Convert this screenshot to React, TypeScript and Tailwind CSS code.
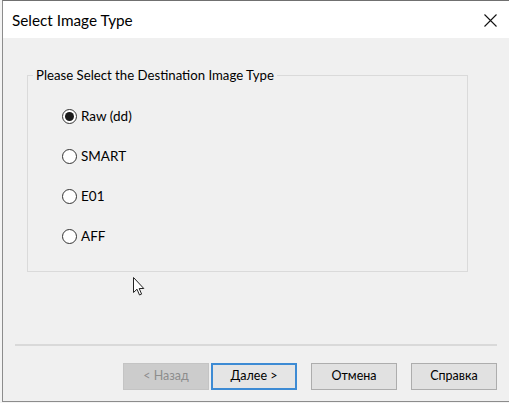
const font = "font-['Lato','Noto_Sans',sans-serif]";

const options = [
  { label: "Raw (dd)", checked: true },
  { label: "SMART", checked: false },
  { label: "E01", checked: false },
  { label: "AFF", checked: false },
];

const Radio = ({ checked }: { checked: boolean }) => (
  <span className="w-[15px] h-[15px] rounded-full border border-[#333333] bg-white flex items-center justify-center shrink-0">
    {checked && <span className="w-[9px] h-[9px] rounded-full bg-[#1a1a1a]" />}
  </span>
);

const DialogButton = ({
  label,
  disabled,
  primary,
}: {
  label: string;
  disabled?: boolean;
  primary?: boolean;
}) => {
  let cls = "bg-[#e1e1e1] border border-[#adadad] text-black";
  if (disabled) cls = "bg-[#cccccc] border border-[#c4c4c4] text-[#8d8d8d]";
  if (primary) cls = "bg-[#e5e5e5] border-2 border-[#3d8bd4] text-black";
  return (
    <button
      type="button"
      className={`w-[86px] h-[27px] flex items-center justify-center text-[12.5px] ${cls}`}
    >
      {label}
    </button>
  );
};

export default function App() {
  return (
    <div className={`relative w-[509px] h-[403px] bg-[#f4f4f4] overflow-hidden ${font}`}>
      <div className="ml-[2px] h-[402px] flex flex-col border-t border-l border-b border-t-[#707070] border-l-[#8c8c8c] border-b-[#8c8c8c]">
        {/* title bar */}
        <div className="h-[37px] bg-white flex items-center justify-between pl-[9px] pr-[12px] shrink-0">
          <span className="text-[15.3px] text-black pt-[2px]">Select Image Type</span>
          <svg width="13" height="13" viewBox="0 0 13 13" className="mt-[1px]">
            <path d="M0.5 0.5 L12.5 12.5 M12.5 0.5 L0.5 12.5" stroke="#111" strokeWidth="1.1" fill="none" />
          </svg>
        </div>

        {/* body */}
        <div className="flex-1 bg-[#f0f0f0] flex flex-col">
          <fieldset className="mt-[29px] ml-[24px] w-[441px] border border-[#dadada] pb-[25px]">
            <legend className="ml-[5px] px-[3px] text-[13.2px] leading-[16px] text-black">
              Please Select the Destination Image Type
            </legend>
            <div className="pt-[23px] pl-[34px] flex flex-col gap-[20px]">
              {options.map((o) => (
                <label key={o.label} className="h-[20px] flex items-center gap-[4px] text-[13.5px] text-black">
                  <Radio checked={o.checked} />
                  <span>{o.label}</span>
                </label>
              ))}
            </div>
          </fieldset>

          <div className="mt-auto mx-[12px] h-[2px] bg-[#d9d9d9]" />

          <div className="mt-[17px] mb-[11px] pr-[12px] flex justify-end">
            <DialogButton label="< Назад" disabled />
            <div className="w-[2px]" />
            <DialogButton label="Далее >" primary />
            <div className="w-[14px]" />
            <DialogButton label="Отмена" />
            <div className="w-[14px]" />
            <DialogButton label="Справка" />
          </div>
        </div>
      </div>

      {/* mouse pointer */}
      <svg width="13" height="20" viewBox="0 0 13 20" className="absolute left-[133px] top-[277px]">
        <path d="M0.5 0.5 L0.5 15.5 L4 12.2 L6.5 18 L8.6 17.1 L6.2 11.5 L10.8 11.5 Z" fill="#fff" stroke="#222" strokeWidth="1" strokeLinejoin="round" />
      </svg>
    </div>
  );
}
